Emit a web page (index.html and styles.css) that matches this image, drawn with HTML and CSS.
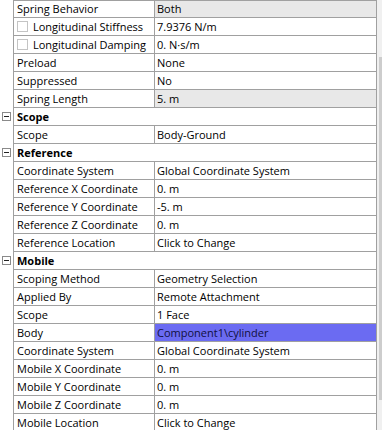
FILE: index.html
```html
<!DOCTYPE html>
<html>
<head>
<meta charset="utf-8">
<link rel="stylesheet" href="styles.css">
</head>
<body>
<div class="wrap">
  <div class="grid">
    <div class="row first"><div class="g"></div><div class="k">Spring Behavior</div><div class="v ro">Both</div></div>
    <div class="row"><div class="g"></div><div class="k chk"><span class="box"></span>Longitudinal Stiffness</div><div class="v">7.9376 N/m</div></div>
    <div class="row"><div class="g"></div><div class="k chk"><span class="box"></span>Longitudinal Damping</div><div class="v">0. N·s/m</div></div>
    <div class="row"><div class="g"></div><div class="k">Preload</div><div class="v">None</div></div>
    <div class="row"><div class="g"></div><div class="k">Suppressed</div><div class="v">No</div></div>
    <div class="row"><div class="g"></div><div class="k">Spring Length</div><div class="v ro">5. m</div></div>
    <div class="row"><div class="g"><span class="tg"></span></div><div class="h">Scope</div></div>
    <div class="row"><div class="g"></div><div class="k">Scope</div><div class="v">Body-Ground</div></div>
    <div class="row"><div class="g"><span class="tg"></span></div><div class="h">Reference</div></div>
    <div class="row"><div class="g"></div><div class="k">Coordinate System</div><div class="v">Global Coordinate System</div></div>
    <div class="row"><div class="g"></div><div class="k">Reference X Coordinate</div><div class="v">0. m</div></div>
    <div class="row"><div class="g"></div><div class="k">Reference Y Coordinate</div><div class="v">-5. m</div></div>
    <div class="row"><div class="g"></div><div class="k">Reference Z Coordinate</div><div class="v">0. m</div></div>
    <div class="row"><div class="g"></div><div class="k">Reference Location</div><div class="v">Click to Change</div></div>
    <div class="row"><div class="g"><span class="tg"></span></div><div class="h">Mobile</div></div>
    <div class="row"><div class="g"></div><div class="k">Scoping Method</div><div class="v">Geometry Selection</div></div>
    <div class="row"><div class="g"></div><div class="k">Applied By</div><div class="v">Remote Attachment</div></div>
    <div class="row"><div class="g"></div><div class="k">Scope</div><div class="v">1 Face</div></div>
    <div class="row"><div class="g"></div><div class="k">Body</div><div class="v sel">Component1\cylinder</div></div>
    <div class="row"><div class="g"></div><div class="k">Coordinate System</div><div class="v">Global Coordinate System</div></div>
    <div class="row"><div class="g"></div><div class="k">Mobile X Coordinate</div><div class="v">0. m</div></div>
    <div class="row"><div class="g"></div><div class="k">Mobile Y Coordinate</div><div class="v">0. m</div></div>
    <div class="row"><div class="g"></div><div class="k">Mobile Z Coordinate</div><div class="v">0. m</div></div>
    <div class="row"><div class="g"></div><div class="k">Mobile Location</div><div class="v">Click to Change</div></div>
  </div>
  <div class="scroll"><div class="thumb"></div></div>
</div>
</body>
</html>
```

FILE: styles.css
```css
html, body {
  margin: 0;
  padding: 0;
  background: #ffffff;
}
.wrap {
  display: flex;
  width: 382px;
  height: 430px;
  overflow: hidden;
  font-family: "Open Sans", "Noto Sans", sans-serif;
  font-size: 11px;
  color: #000;
}
.grid {
  width: 377px;
  flex: none;
}
.row {
  display: grid;
  grid-template-columns: 13px 141px 1fr;
  height: 18px;
}
.row.first .k,
.row.first .v {
  border-top: 1px solid #a0a0a0;
  line-height: 16px;
}
.g {
  position: relative;
}
.tg {
  position: absolute;
  left: 2px;
  top: 4px;
  width: 7px;
  height: 7px;
  border: 1px solid #8a8a8a;
  background: #fff;
}
.tg::after {
  content: "";
  position: absolute;
  left: 1px;
  top: 3px;
  width: 5px;
  height: 1px;
  background: #222;
}
.k, .v, .h {
  border-left: 1px solid #a0a0a0;
  border-bottom: 1px solid #a0a0a0;
  line-height: 17px;
  white-space: nowrap;
  overflow: hidden;
}
.k {
  padding-left: 3px;
}
.v {
  padding-left: 2px;
  border-right: 1px solid #a0a0a0;
}
.h {
  grid-column: 2 / 4;
  padding-left: 3px;
  border-right: 1px solid #a0a0a0;
  font-weight: bold;
}
.chk {
  display: flex;
  align-items: center;
}
.box {
  width: 9px;
  height: 9px;
  border: 1px solid #c4c4c4;
  background: #fff;
  margin-right: 5px;
  flex: none;
}
.ro {
  background: #e8e8e8;
}
.sel {
  background: #6b6bf2;
  color: #101040;
}
.scroll {
  width: 5px;
  flex: none;
  background: #f0f0f0;
  position: relative;
}
.thumb {
  position: absolute;
  left: 2px;
  right: 0;
  top: 57px;
  bottom: 30px;
  background: #cdcdcd;
}
```
